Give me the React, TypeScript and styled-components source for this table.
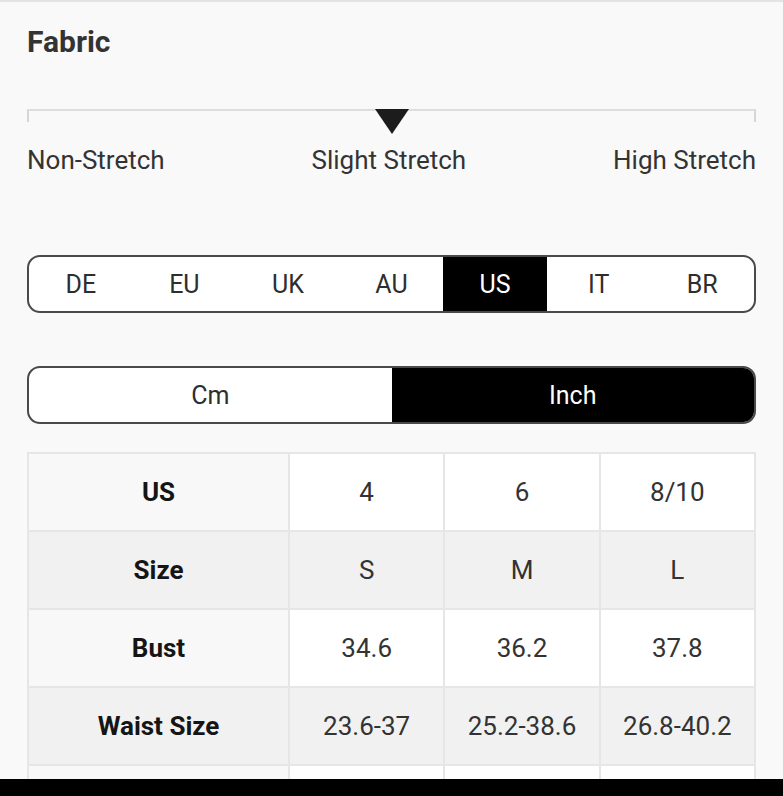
import React from 'react'
import styled, { createGlobalStyle } from 'styled-components'

const GlobalStyle = createGlobalStyle`
  html, body {
    margin: 0;
    padding: 0;
    background: #f9f9f9;
    font-family: Roboto, "Liberation Sans", Arial, sans-serif;
  }
  * { box-sizing: border-box; }
`

const regions = ['DE', 'EU', 'UK', 'AU', 'US', 'IT', 'BR']
const units = ['Cm', 'Inch']

// last row only peeks out above the bottom bar
const rows = [
  { label: 'US', values: ['4', '6', '8/10'] },
  { label: 'Size', values: ['S', 'M', 'L'] },
  { label: 'Bust', values: ['34.6', '36.2', '37.8'] },
  { label: 'Waist Size', values: ['23.6-37', '25.2-38.6', '26.8-40.2'] },
  { label: '', values: ['', '', ''] },
]

const Screen = styled.div`
  height: 796px;
  display: flex;
  flex-direction: column;
  overflow: hidden;
`

const Content = styled.div`
  flex: 1;
  min-height: 0;
  overflow: hidden;
  border-top: 2px solid #e3e3e3;
  padding: 23px 27px 0;
`

const BottomBar = styled.div`
  height: 17px;
  background: #000;
  flex-shrink: 0;
`

const Title = styled.h2`
  margin: 0;
  font-size: 30px;
  line-height: 34px;
  font-weight: 700;
  color: #333;
`

const Track = styled.div`
  position: relative;
  margin-top: 50px;
  height: 13px;
  border-top: 2px solid #dedede;
  border-left: 2px solid #d6d6d6;
  border-right: 2px solid #d6d6d6;
`

const Marker = styled.div`
  position: absolute;
  top: -2px;
  left: 50%;
  transform: translateX(-50%);
  width: 0;
  height: 0;
  border-left: 17px solid transparent;
  border-right: 17px solid transparent;
  border-top: 25px solid #1c1c1c;
`

const ScaleLabels = styled.div`
  display: flex;
  justify-content: space-between;
  margin-top: 23px;
  font-size: 26px;
  line-height: 30px;
  color: #333;
`

const Segmented = styled.div<{ cols: number; mt: number }>`
  display: grid;
  grid-template-columns: repeat(${p => p.cols}, 1fr);
  margin-top: ${p => p.mt}px;
  height: 58px;
  border: 2px solid #4a4a4a;
  border-radius: 13px;
  overflow: hidden;
  background: #fff;
`

const Segment = styled.div<{ active?: boolean }>`
  display: flex;
  align-items: center;
  justify-content: center;
  font-size: 25px;
  color: ${p => (p.active ? '#fff' : '#2e2e2e')};
  background: ${p => (p.active ? '#000' : 'transparent')};
`

const SizeTable = styled.table`
  margin-top: 28px;
  width: 729px;
  border-collapse: collapse;
  table-layout: fixed;
`

const Cell = styled.td<{ head?: boolean; shaded?: boolean }>`
  height: 78px;
  padding: 0;
  text-align: center;
  vertical-align: middle;
  border: 2px solid #e6e6e6;
  font-size: 26px;
  font-weight: ${p => (p.head ? 700 : 400)};
  color: ${p => (p.head ? '#151515' : '#333')};
  background: ${p => (p.shaded ? '#f1f1f1' : p.head ? '#f8f8f8' : '#fff')};
`

export default function App() {
  return (
    <>
      <GlobalStyle />
      <Screen>
        <Content>
          <Title>Fabric</Title>
          <Track>
            <Marker />
          </Track>
          <ScaleLabels>
            <span>Non-Stretch</span>
            <span>Slight Stretch</span>
            <span>High Stretch</span>
          </ScaleLabels>

          <Segmented cols={regions.length} mt={80}>
            {regions.map(r => (
              <Segment key={r} active={r === 'US'}>{r}</Segment>
            ))}
          </Segmented>

          <Segmented cols={units.length} mt={53}>
            {units.map(u => (
              <Segment key={u} active={u === 'Inch'}>{u}</Segment>
            ))}
          </Segmented>

          <SizeTable>
            <colgroup>
              <col style={{ width: 261 }} />
              <col />
              <col />
              <col />
            </colgroup>
            <tbody>
              {rows.map((row, i) => (
                <tr key={i}>
                  <Cell head shaded={i % 2 === 1}>{row.label}</Cell>
                  {row.values.map((v, j) => (
                    <Cell key={j} shaded={i % 2 === 1}>{v}</Cell>
                  ))}
                </tr>
              ))}
            </tbody>
          </SizeTable>
        </Content>
        <BottomBar />
      </Screen>
    </>
  )
}
